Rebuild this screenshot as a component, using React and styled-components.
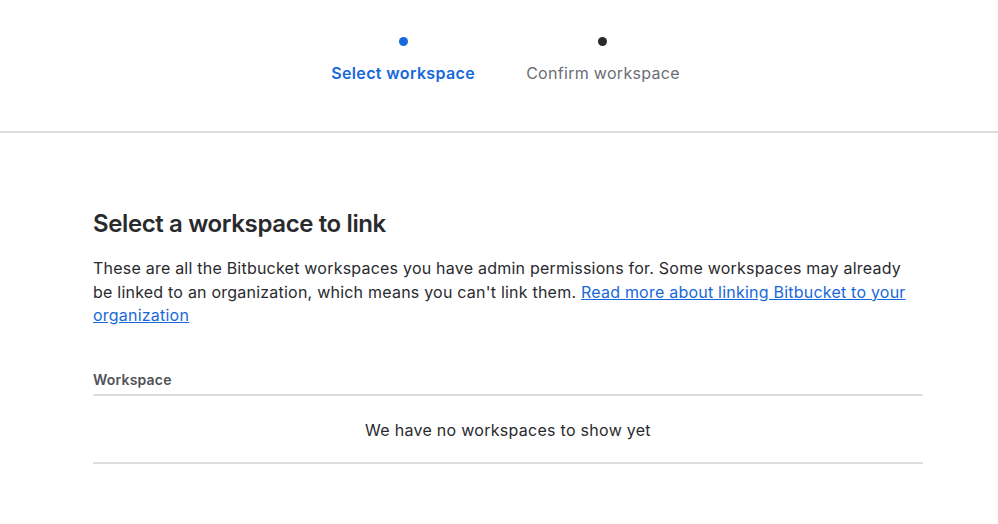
import React from 'react';
import styled, { createGlobalStyle } from 'styled-components';

const GlobalStyle = createGlobalStyle`
    html, body {
        margin: 0;
        padding: 0;
        background: #fff;
        font-family: Inter, "Noto Sans", "Liberation Sans", sans-serif;
        color: #292a2e;
    }
`;

const steps = [
    { label: 'Select workspace', active: true },
    { label: 'Confirm workspace', active: false },
];

function App() {
    return (
        <>
            <GlobalStyle />
            <Header>
                <Stepper>
                    {steps.map((step) => (
                        <Step key={step.label}>
                            <Dot $active={step.active} />
                            <StepLabel $active={step.active}>{step.label}</StepLabel>
                        </Step>
                    ))}
                </Stepper>
            </Header>
            <Main>
                <Title>Select a workspace to link</Title>
                <Description>
                    These are all the Bitbucket workspaces you have admin permissions for. Some
                    workspaces may already be linked to an organization, which means you can't link
                    them. <Link href="#">Read more about linking Bitbucket to your organization</Link>
                </Description>
                <Table>
                    <thead>
                        <tr>
                            <HeadCell>Workspace</HeadCell>
                        </tr>
                    </thead>
                    <tbody>
                        <tr>
                            <EmptyCell>We have no workspaces to show yet</EmptyCell>
                        </tr>
                    </tbody>
                </Table>
            </Main>
        </>
    );
}

export default App;

const Header = styled.header`
    box-sizing: border-box;
    height: 133px;
    border-bottom: 2px solid #dddee1;
`;

const Stepper = styled.div`
    display: flex;
    justify-content: center;
    gap: 51px;
    padding: 37px 0 0 13px;
`;

const Step = styled.div`
    display: flex;
    flex-direction: column;
    align-items: center;
    gap: 17px;
`;

const Dot = styled.span`
    width: 9px;
    height: 9px;
    border-radius: 50%;
    background: ${(p) => (p.$active ? '#1868db' : '#292a2e')};
`;

const StepLabel = styled.span`
    font-size: 16px;
    line-height: 20px;
    letter-spacing: ${(p) => (p.$active ? '0.37px' : '0.3px')};
    font-weight: ${(p) => (p.$active ? 600 : 400)};
    color: ${(p) => (p.$active ? '#1868db' : '#6b6e76')};
`;

const Main = styled.main`
    width: 830px;
    margin: 0 0 0 93px;
    padding-top: 77px;
`;

const Title = styled.h1`
    margin: 0;
    font-size: 24px;
    line-height: 28px;
    letter-spacing: -0.38px;
    font-weight: 600;
    color: #292a2e;
`;

const Description = styled.p`
    margin: 19px 0 0;
    font-size: 16px;
    line-height: 23.5px;
    letter-spacing: 0.22px;
    color: #292a2e;
`;

const Link = styled.a`
    color: #1868db;
    text-decoration: underline;
`;

const Table = styled.table`
    width: 100%;
    margin-top: 44px;
    border-collapse: collapse;
`;

const HeadCell = styled.th`
    text-align: left;
    padding: 0 0 6px;
    font-size: 14px;
    line-height: 16px;
    letter-spacing: 0.2px;
    font-weight: 600;
    color: #505258;
    border-bottom: 2px solid #dddee1;
`;

const EmptyCell = styled.td`
    text-align: center;
    padding: 22px 0 20px;
    font-size: 16px;
    line-height: 24px;
    letter-spacing: 0.28px;
    color: #292a2e;
    border-bottom: 2px solid #dddee1;
`;
